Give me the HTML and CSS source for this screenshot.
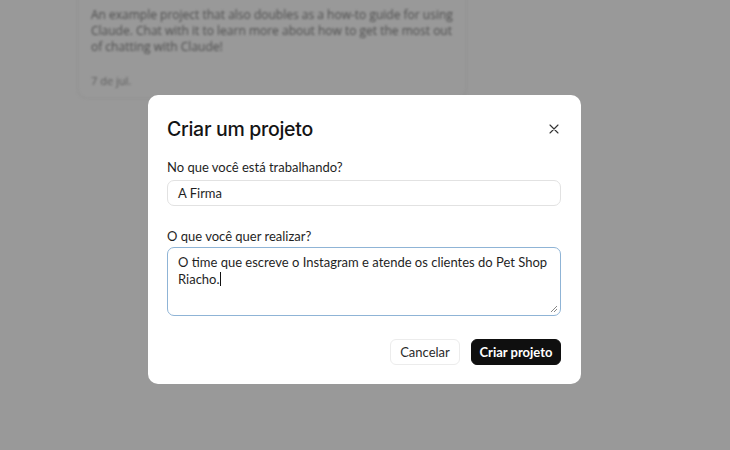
FILE: index.html
```html
<!DOCTYPE html>
<html lang="pt-BR">
<head>
<meta charset="utf-8">
<title>Criar um projeto</title>
<link rel="stylesheet" href="styles.css">
</head>
<body>
<div class="page">
  <div class="bg-card">
    <p class="bg-desc">An example project that also doubles as a how-to guide for using Claude. Chat with it to learn more about how to get the most out of chatting with Claude!</p>
    <p class="bg-date">7 de jul.</p>
  </div>
</div>
<div class="overlay">
  <div class="modal">
    <div class="modal-head">
      <h2 class="modal-title">Criar um projeto</h2>
      <button class="close" aria-label="Fechar">
        <svg width="12" height="12" viewBox="0 0 12 12"><path d="M2 2 L10 10 M10 2 L2 10" stroke="#333" stroke-width="1.1" stroke-linecap="round" fill="none"/></svg>
      </button>
    </div>
    <label class="label label-1">No que você está trabalhando?</label>
    <div class="input">A Firma</div>
    <label class="label label-2">O que você quer realizar?</label>
    <div class="textarea">
      <span>O time que escreve o Instagram e atende os clientes do Pet Shop Riacho.</span><span class="caret"></span>
      <svg class="grip" width="8" height="8" viewBox="0 0 8 8"><path d="M7 1 L1 7 M7 4 L4 7" stroke="#888" stroke-width="1" fill="none"/></svg>
    </div>
    <div class="actions">
      <button class="btn btn-ghost">Cancelar</button>
      <button class="btn btn-primary">Criar projeto</button>
    </div>
  </div>
</div>
</body>
</html>
```
FILE: styles.css
```css
html, body {
  margin: 0;
  padding: 0;
}
body {
  width: 730px;
  height: 450px;
  background: #999999;
  font-family: Lato, "Noto Sans", sans-serif;
  overflow: hidden;
  position: relative;
}
.page {
  padding-left: 77px;
}
.bg-card {
  width: 390px;
  box-sizing: border-box;
  margin-top: -15px;
  padding: 22px 13px 10px 13px;
  border: 1px solid #929292;
  border-top: none;
  border-radius: 0 0 10px 10px;
  filter: blur(0.9px);
  color: #4e4e4e;
  font-family: "Open Sans", sans-serif;
  font-size: 12px;
}
.bg-desc {
  margin: 0;
  line-height: 16px;
  width: 365px;
}
.bg-date {
  margin: 19px 0 0 0;
  font-size: 11px;
  line-height: 14px;
  color: #5e5e5e;
}
.overlay {
  position: absolute;
  left: 148px;
  top: 95px;
}
.modal {
  width: 433px;
  height: 289px;
  box-sizing: border-box;
  background: #ffffff;
  border-radius: 10px;
  padding: 20px 20px 19px 19px;
  display: flex;
  flex-direction: column;
  color: #1a1a1a;
}
.modal-head {
  display: flex;
  align-items: center;
  justify-content: space-between;
  height: 28px;
}
.modal-title {
  margin: 0;
  font-family: Inter, "Noto Sans", sans-serif;
  font-size: 19.5px;
  font-weight: 500;
  letter-spacing: -0.3px;
  color: #141414;
}
.close {
  border: none;
  background: none;
  padding: 0;
  width: 12px;
  height: 12px;
  margin-right: 1px;
  display: flex;
}
.label {
  font-size: 13px;
  line-height: 16px;
  color: #1f1f1f;
}
.label-1 {
  margin-top: 16px;
}
.label-2 {
  margin-top: 22px;
}
.input {
  margin-top: 5px;
  height: 26px;
  box-sizing: border-box;
  border: 1px solid #e2e2e2;
  border-radius: 7px;
  padding: 0 10px;
  font-size: 13px;
  line-height: 24px;
  color: #1f1f1f;
}
.textarea {
  margin-top: 3px;
  height: 69px;
  box-sizing: border-box;
  border: 1px solid #8fb4d6;
  border-radius: 7px;
  padding: 6px 10px;
  font-size: 13px;
  line-height: 17px;
  color: #1f1f1f;
  position: relative;
}
.caret {
  display: inline-block;
  width: 1px;
  height: 14px;
  background: #111;
  vertical-align: -2px;
}
.grip {
  position: absolute;
  right: 2px;
  bottom: 2px;
}
.actions {
  margin-top: auto;
  display: flex;
  justify-content: flex-end;
  gap: 11px;
}
.btn {
  height: 26px;
  box-sizing: border-box;
  border-radius: 6px;
  font-family: Lato, "Noto Sans", sans-serif;
  font-size: 13px;
  padding: 0;
  white-space: nowrap;
}
.btn-ghost {
  width: 70px;
  background: #fff;
  border: 1px solid #ececec;
  color: #2a2a2a;
}
.btn-primary {
  width: 90px;
  background: #0f0f0f;
  border: 1px solid #0f0f0f;
  color: #fff;
  font-weight: 700;
}
```
